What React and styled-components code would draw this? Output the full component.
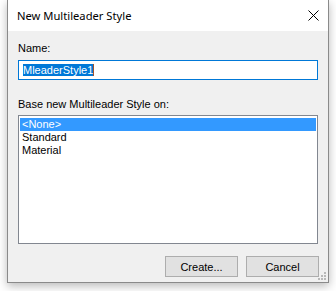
import React from "react";
import styled, { createGlobalStyle } from "styled-components";

const Global = createGlobalStyle`
  html, body { margin: 0; padding: 0; background: #ffffff; }
  body { width: 336px; height: 291px; overflow: hidden; }
  * { box-sizing: border-box; }
`;

const Window = styled.div`
  position: relative;
  margin-left: 7px;
  width: 322px;
  height: 283px;
  background: #f0f0f0;
  border: 1px solid #8a8a8a;
  border-top: none;
  box-shadow: 0 3px 9px rgba(0, 0, 0, 0.28);
  display: flex;
  flex-direction: column;
  font-family: "Liberation Sans", Arial, sans-serif;
  font-size: 11px;
  color: #000;
`;

const TitleBar = styled.div`
  height: 31px;
  background: #ffffff;
  display: flex;
  align-items: center;
  justify-content: space-between;
  padding: 0 9px;
`;

const Title = styled.span`
  font-family: "Segoe UI", "Noto Sans", sans-serif;
  font-size: 11.2px;
  line-height: 16px;
`;

const Body = styled.div`
  flex: 1;
  display: flex;
  flex-direction: column;
  padding: 9px 10px 5px 10px;
`;

const Label = styled.div`
  line-height: 16px;
  height: 16px;
  margin-top: ${(p) => p.$mt || 0}px;
`;

const Input = styled.div`
  margin-top: 4px;
  height: 20px;
  border: 1px solid #0078d7;
  background: #fff;
  display: flex;
  align-items: center;
  padding-left: 4px;
`;

const Selection = styled.span`
  background: #0078d7;
  color: #fff;
  line-height: 12px;
  height: 12px;
  padding: 0 0 0 0;
  display: inline-flex;
  align-items: center;
  border-right: 1px solid #a0522d;
`;

const ListBox = styled.div`
  margin-top: 3px;
  height: 129px;
  border: 1px solid #828790;
  background: #fff;
  padding: 2px 1px;
  display: flex;
  flex-direction: column;
`;

const Item = styled.div`
  height: 13px;
  line-height: 13px;
  padding-left: 2px;
  background: ${(p) => (p.$selected ? "#3399ff" : "transparent")};
  color: ${(p) => (p.$selected ? "#fff" : "#000")};
`;

const Buttons = styled.div`
  margin-top: 12px;
  display: flex;
  justify-content: flex-end;
  gap: 8px;
  margin-right: -1px;
`;

const Button = styled.button`
  width: 73px;
  height: 21px;
  background: #e1e1e1;
  border: 1px solid #adadad;
  font-family: inherit;
  font-size: 11px;
  color: #000;
  padding: 0;
  margin: 0;
`;

const Grip = styled.svg`
  position: absolute;
  right: 2px;
  bottom: 2px;
`;

const CloseIcon = () => (
  <svg width="11" height="11" viewBox="0 0 11 11">
    <path d="M0.5 0.5 L10.5 10.5 M10.5 0.5 L0.5 10.5" stroke="#000" strokeWidth="1" fill="none" />
  </svg>
);

export default function App() {
  return (
    <>
      <Global />
      <Window>
        <TitleBar>
          <Title>New Multileader Style</Title>
          <CloseIcon />
        </TitleBar>
        <Body>
          <Label>Name:</Label>
          <Input>
            <Selection>MleaderStyle1</Selection>
          </Input>
          <Label $mt={16}>Base new Multileader Style on:</Label>
          <ListBox>
            <Item $selected>&lt;None&gt;</Item>
            <Item>Standard</Item>
            <Item>Material</Item>
          </ListBox>
          <Buttons>
            <Button>Create...</Button>
            <Button>Cancel</Button>
          </Buttons>
        </Body>
        <Grip width="8" height="8" viewBox="0 0 8 8">
          <rect x="6" y="0" width="2" height="2" fill="#b8b8b8" />
          <rect x="3" y="3" width="2" height="2" fill="#b8b8b8" />
          <rect x="6" y="3" width="2" height="2" fill="#b8b8b8" />
          <rect x="0" y="6" width="2" height="2" fill="#b8b8b8" />
          <rect x="3" y="6" width="2" height="2" fill="#b8b8b8" />
          <rect x="6" y="6" width="2" height="2" fill="#b8b8b8" />
        </Grip>
      </Window>
    </>
  );
}
